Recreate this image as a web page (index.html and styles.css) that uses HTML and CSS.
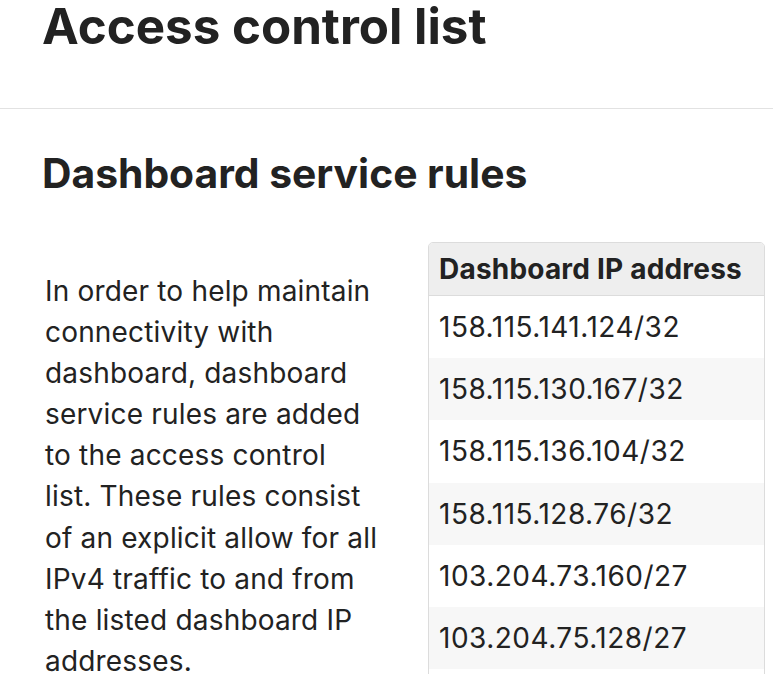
FILE: index.html
```html
<!DOCTYPE html>
<html lang="en">
<head>
<meta charset="utf-8">
<title>Access control list</title>
<link rel="stylesheet" href="styles.css">
</head>
<body>
<header class="page-head">
  <h1 class="title">Access control list</h1>
</header>
<main class="content">
  <h2 class="section-title">Dashboard service rules</h2>
  <div class="columns">
    <p class="intro">In order to help maintain connectivity with dashboard, dashboard service rules are added to the access control list. These rules consist of an explicit allow for all IPv4 traffic to and from the listed dashboard IP addresses.</p>
    <div class="table-wrap">
      <table class="ip-table">
        <thead>
          <tr><th>Dashboard IP address</th></tr>
        </thead>
        <tbody>
          <tr><td>158.115.141.124/32</td></tr>
          <tr><td>158.115.130.167/32</td></tr>
          <tr><td>158.115.136.104/32</td></tr>
          <tr><td>158.115.128.76/32</td></tr>
          <tr><td>103.204.73.160/27</td></tr>
          <tr><td>103.204.75.128/27</td></tr>
          <tr><td>103.204.74.0/27</td></tr>
        </tbody>
      </table>
    </div>
  </div>
</main>
</body>
</html>
```
FILE: styles.css
```css
html, body {
  margin: 0;
  padding: 0;
  background: #fff;
}
body {
  font-family: Inter, "Noto Sans", "Liberation Sans", sans-serif;
  color: #222;
  overflow: hidden;
}
.page-head {
  border-bottom: 1px solid #e2e2e2;
  padding: 0 42px;
  height: 108px;
}
.title {
  margin: 0;
  font-size: 49.3px;
  font-weight: 700;
  line-height: 52px;
}
.content {
  padding: 0 0 0 42px;
}
.section-title {
  margin: 40px 0 0;
  font-size: 40.8px;
  font-weight: 700;
  line-height: 48px;
}
.columns {
  display: flex;
  gap: 49px;
  align-items: flex-start;
  margin-top: 45px;
}
.intro {
  width: 334px;
  flex: none;
  margin: 29px 0 0 3px;
  font-size: 28px;
  line-height: 41.1px;
  letter-spacing: 0.18px;
}
.table-wrap {
  width: 335px;
  flex: none;
  border: 1px solid #dcdcdc;
  border-radius: 5px;
  overflow: hidden;
}
.ip-table {
  width: 100%;
  border-collapse: collapse;
  font-size: 28px;
}
.ip-table th {
  text-align: left;
  font-weight: 700;
  letter-spacing: 0.2px;
  background: #eeeeee;
  border-bottom: 1px solid #dcdcdc;
  padding: 0 10px;
  height: 52px;
}
.ip-table td {
  padding: 0 10px;
  height: 62.2px;
  letter-spacing: 0.5px;
}
.ip-table tbody tr:nth-child(even) td {
  background: #f7f7f7;
}
```
